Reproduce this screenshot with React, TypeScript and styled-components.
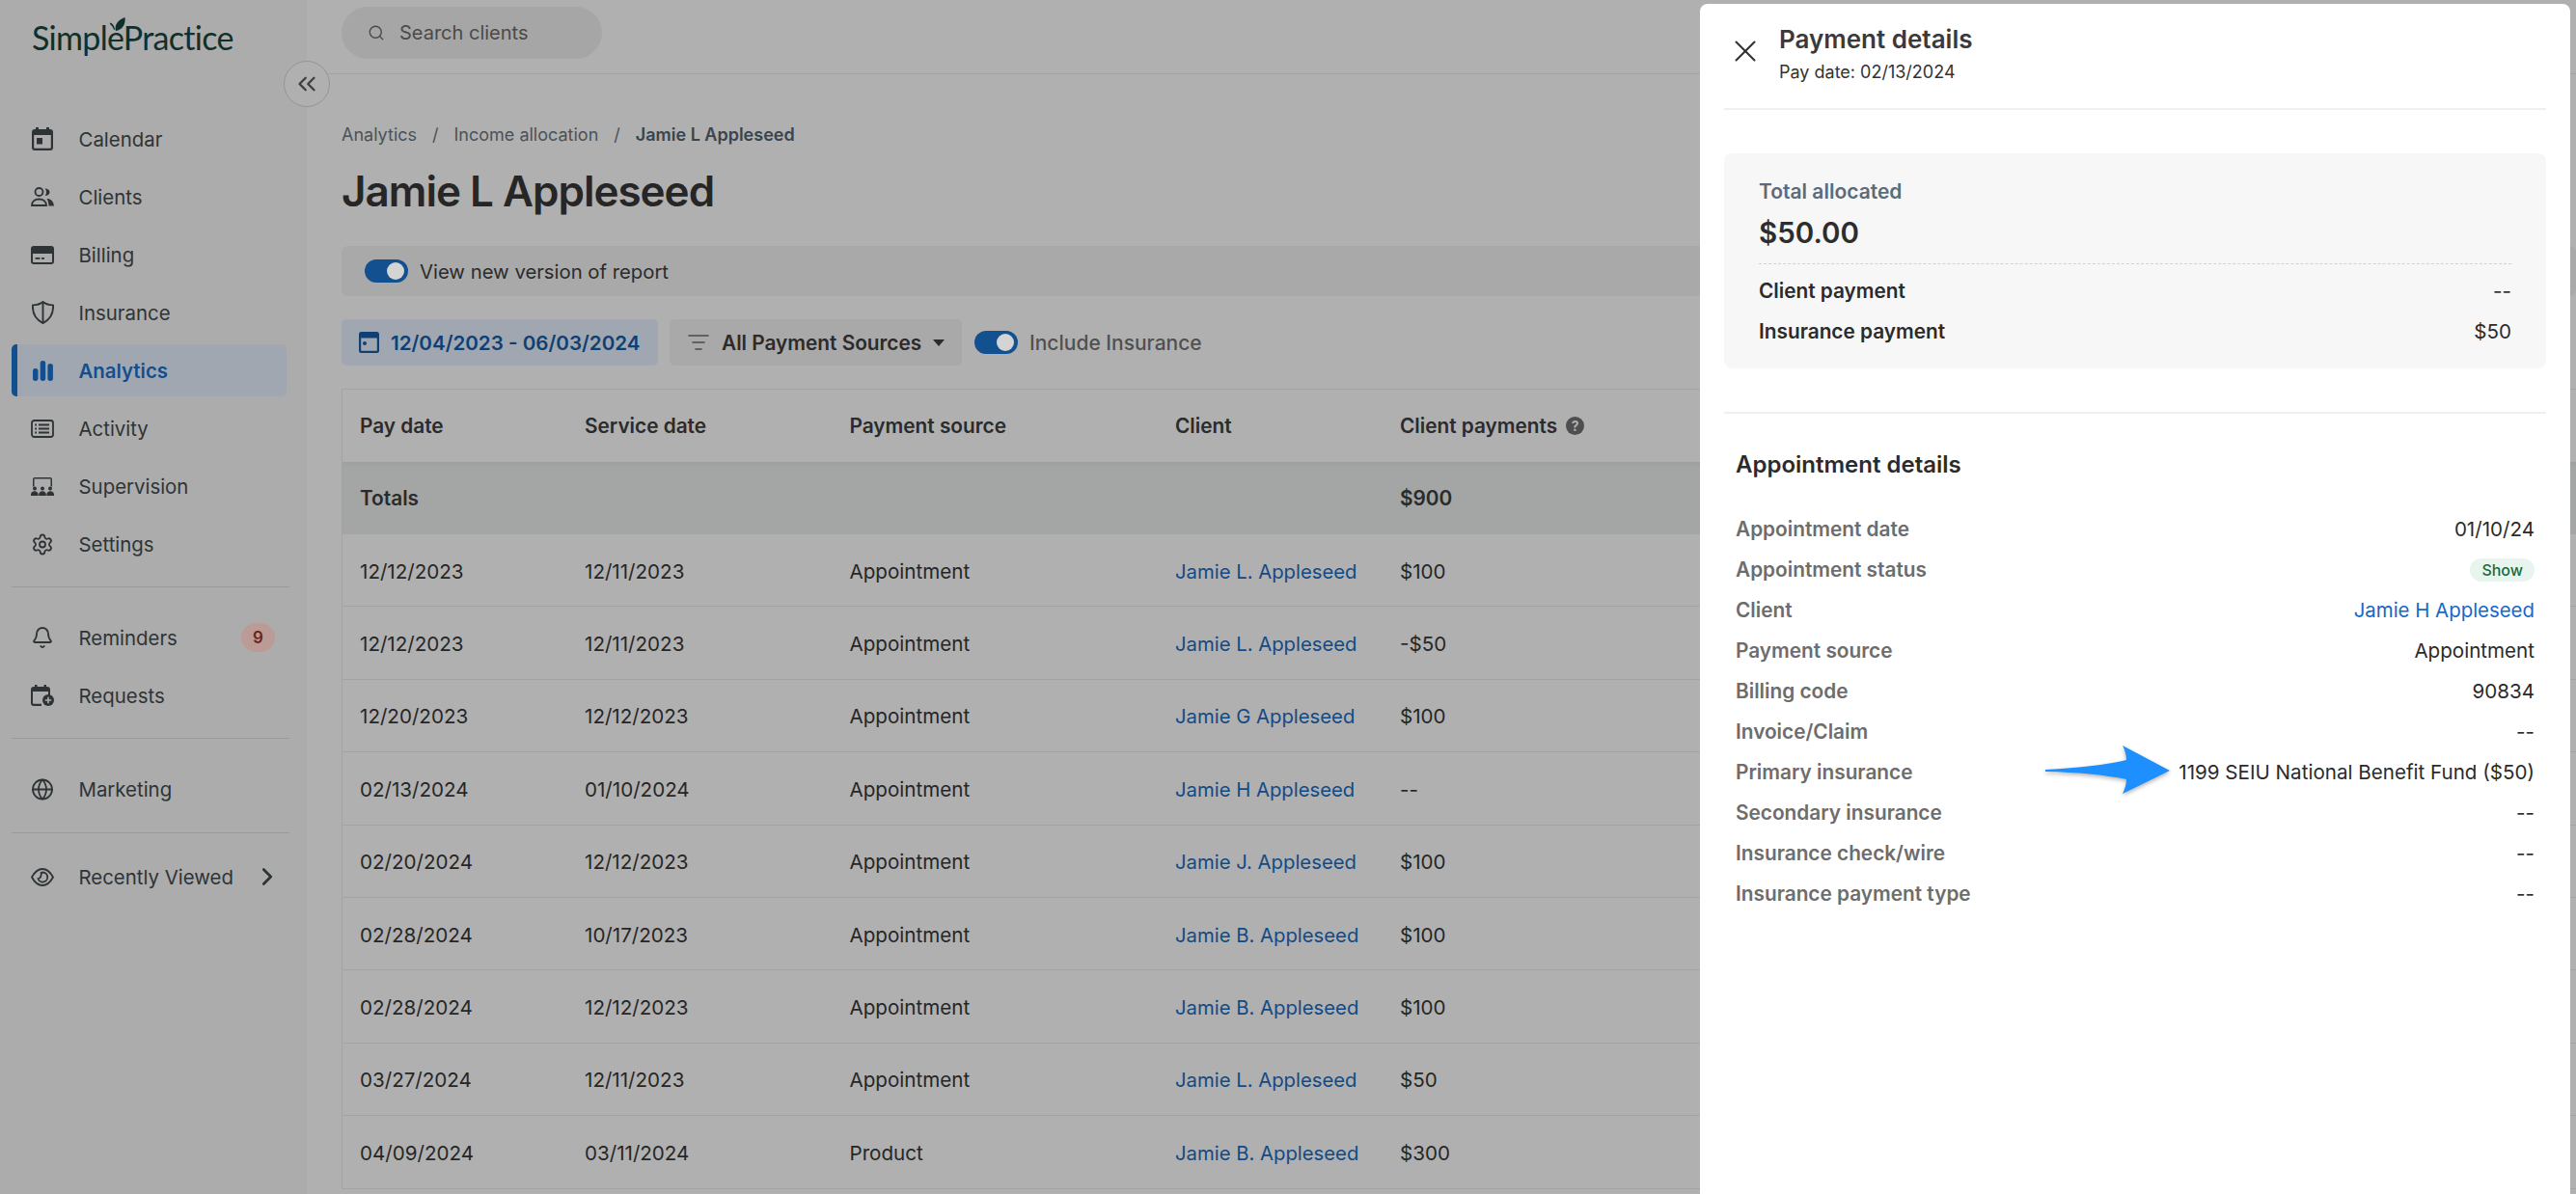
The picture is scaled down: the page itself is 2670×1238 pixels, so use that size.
import React from "react";
import styled, { createGlobalStyle } from "styled-components";
import { Bell, ChevronRight, ChevronsLeft, Globe, ListFilter, Search, Settings, X } from "lucide-react";

const GlobalStyle = createGlobalStyle`
  html, body {
    margin: 0;
    padding: 0;
    background: #b0b0b0;
  }
  * {
    box-sizing: border-box;
  }
  body {
    font-family: Inter, "Liberation Sans", sans-serif;
    font-size: 20.6px;
    color: #262626;
  }
`;

const Page = styled.div`
  position: relative;
  display: flex;
  width: 2670px;
  height: 1238px;
  overflow: hidden;
  background: #b0b0b0;
`;

/* sidebar */
const Sidebar = styled.aside`
  position: relative;
  flex: none;
  width: 318px;
  background: #acacac;
`;

const LogoRow = styled.div`
  height: 117px;
  padding: 14px 0 0 33px;
`;

const Logo = styled.div`
  position: relative;
  display: inline-block;
  font-family: Lato, sans-serif;
  font-size: 34px;
  line-height: 50px;
  letter-spacing: -0.7px;
  color: #10302c;
`;

const Leaf = styled.svg`
  position: absolute;
  left: 81px;
  top: 4px;
  width: 16px;
  height: 15px;
`;

const CollapseButton = styled.button`
  position: absolute;
  left: 294px;
  top: 63px;
  width: 48px;
  height: 48px;
  display: flex;
  align-items: center;
  justify-content: center;
  padding: 0;
  border: 1px solid #959595;
  border-radius: 50%;
  background: #b0b0b0;
  color: #3d3d3d;
`;

const Nav = styled.nav`
  display: flex;
  flex-direction: column;
  gap: 6px;
`;

const NavItem = styled.a<{ $active?: boolean }>`
  position: relative;
  display: flex;
  align-items: center;
  gap: 25.5px;
  height: 54px;
  margin: 0 21px 0 12px;
  border-radius: 5px;
  font-size: 20.4px;
  color: ${(p) => (p.$active ? "#114f8f" : "#2e3436")};
  font-weight: ${(p) => (p.$active ? 600 : 400)};
  background: ${(p) => (p.$active ? "#a1a7b0" : "transparent")};
  border-left: ${(p) => (p.$active ? "6px solid #114f8f" : "0")};
  padding-left: ${(p) => (p.$active ? "14px" : "20px")};
`;

const NavIcon = styled.span`
  flex: none;
  display: flex;
  align-items: center;
  justify-content: center;
  width: 24px;
  height: 30px;
  color: #2e3436;
`;

const ActiveIcon = styled(NavIcon)`
  color: #114f8f;
`;

const NavDivider = styled.hr<{ $after: number; $before: number }>`
  width: 288px;
  height: 1px;
  margin: ${(p) => p.$before}px 0 ${(p) => p.$after}px 12px;
  border: 0;
  background: #999;
`;

const Badge = styled.span`
  position: absolute;
  left: 238px;
  top: 12px;
  display: flex;
  align-items: center;
  justify-content: center;
  width: 35px;
  height: 30px;
  border-radius: 15px;
  background: #bb9b96;
  color: #6b241c;
  font-size: 17px;
  font-weight: 600;
`;

const RowChevron = styled.span`
  position: absolute;
  left: 250px;
  top: 12px;
  display: flex;
  color: #2e3436;
`;

/* main column */
const Main = styled.main`
  flex: 1;
  min-width: 0;
`;

const TopBar = styled.header`
  height: 77px;
  padding: 7px 0 0 36px;
  border-bottom: 1px solid #a3a3a3;
`;

const SearchPill = styled.div`
  display: flex;
  align-items: center;
  gap: 15px;
  width: 270px;
  height: 54px;
  padding-left: 27px;
  border-radius: 27px;
  background: #a6a6a6;
  color: #4a4a4a;
  font-size: 20px;
`;

const Content = styled.div`
  padding: 50px 0 0 36px;
`;

const Breadcrumb = styled.div`
  display: flex;
  align-items: center;
  gap: 16px;
  height: 24px;
  font-size: 18px;
  color: #4a5259;
`;

const CrumbCurrent = styled.span`
  font-weight: 600;
  color: #3a444c;
`;

const Title = styled.h1`
  margin: 19px 0 29px;
  font-size: 44px;
  line-height: 56px;
  font-weight: 600;
  letter-spacing: -1px;
  color: #262626;
`;

const Banner = styled.div`
  display: flex;
  align-items: center;
  gap: 12px;
  height: 52px;
  padding: 0 0 0 24px;
  border-radius: 6px;
  background: #a9a9a9;
  color: #2b2b2b;
  font-size: 20.3px;
`;

const Toggle = styled.span`
  position: relative;
  flex: none;
  display: block;
  width: 45px;
  height: 24px;
  border-radius: 12px;
  background: #12508f;
  &::after {
    content: "";
    position: absolute;
    right: 4px;
    top: 3px;
    width: 18px;
    height: 18px;
    border-radius: 50%;
    background: #d4d4d4;
  }
`;

const Filters = styled.div`
  display: flex;
  align-items: center;
  height: 48px;
  margin: 24px 0;
`;

const DateButton = styled.button`
  display: flex;
  align-items: center;
  gap: 12px;
  width: 328px;
  height: 48px;
  padding: 0 0 0 18px;
  border: 0;
  border-radius: 5px;
  background: #a1a7b0;
  color: #103f73;
  font: 600 20.6px Inter, sans-serif;
`;

const SourceButton = styled.button`
  display: flex;
  align-items: center;
  gap: 12px;
  width: 303px;
  height: 48px;
  margin: 0 13px 0 12px;
  padding: 0 0 0 18px;
  border: 0;
  border-radius: 5px;
  background: #a9a9a9;
  color: #2b2b2b;
  font: 600 20.8px Inter, sans-serif;
`;

const Caret = styled.span`
  width: 0;
  height: 0;
  border-left: 6px solid transparent;
  border-right: 6px solid transparent;
  border-top: 7px solid #2b2b2b;
`;

const IncludeLabel = styled.span`
  margin-left: 12px;
  font-size: 21px;
  font-weight: 500;
  color: #505050;
`;

const Table = styled.div`
  border-top: 1px solid #a3a3a3;
  border-left: 1px solid #a3a3a3;
`;

const TableRow = styled.div<{ $kind?: "head" | "total" }>`
  display: grid;
  grid-template-columns: 233px 274.5px 337.5px 233px 1fr;
  align-items: center;
  height: ${(p) => (p.$kind ? "75px" : "75.4px")};
  padding: ${(p) => (p.$kind ? "0" : "2px")} 0 0 18px;
  background: ${(p) => (p.$kind === "total" ? "#a3a6a5" : "transparent")};
  box-shadow: ${(p) => (p.$kind === "total" ? "inset 0 5px 5px -3px rgba(0, 0, 0, 0.05)" : "none")};
  border-bottom: ${(p) => (p.$kind ? "0" : "1px solid #a4a4a4")};
  font-size: ${(p) => (p.$kind ? "20.8px" : "20.6px")};
  font-weight: ${(p) => (p.$kind ? 600 : 400)};
  color: ${(p) => (p.$kind ? "#2b2b2b" : "#262626")};
`;

const HeadWithHelp = styled.span`
  display: flex;
  align-items: center;
  gap: 9px;
`;

const HelpDot = styled.span`
  display: flex;
  align-items: center;
  justify-content: center;
  width: 19px;
  height: 19px;
  border-radius: 50%;
  background: #4e4e4e;
  color: #b0b0b0;
  font-size: 14px;
  font-weight: 700;
`;

const ClientLink = styled.a`
  font-size: 20.3px;
  color: #134a85;
`;

/* drawer */
const Drawer = styled.section`
  position: absolute;
  left: 1762px;
  top: 4px;
  right: 6px;
  bottom: 0;
  padding: 0 25px;
  border-radius: 8px 8px 0 0;
  background: #fff;
`;

const DrawerHeader = styled.header`
  display: flex;
  align-items: center;
  gap: 16px;
  height: 110px;
  padding: 0 0 4px 3px;
  border-bottom: 2px solid #f0f0f0;
`;

const CloseIcon = styled.span`
  display: flex;
  margin-bottom: 6px;
  color: #333;
`;

const DrawerTitle = styled.h2`
  margin: 0 0 6px;
  font-size: 26px;
  line-height: 32px;
  font-weight: 600;
  color: #3a3a3a;
`;

const DrawerSub = styled.div`
  font-size: 18px;
  line-height: 24px;
  color: #333;
`;

const SummaryCard = styled.div`
  height: 223px;
  margin-top: 45px;
  padding: 26px 36px 0;
  border-radius: 8px;
  background: #f7f7f7;
`;

const SummaryLabel = styled.div`
  font-size: 21px;
  line-height: 28px;
  font-weight: 600;
  color: #5a6b7b;
`;

const SummaryTotal = styled.div`
  margin-top: 8px;
  padding-bottom: 12px;
  border-bottom: 1px dashed #d2d2d2;
  font-size: 29.5px;
  line-height: 40px;
  font-weight: 600;
  color: #2d2d2d;
`;

const SummaryRow = styled.div`
  display: flex;
  justify-content: space-between;
  margin-top: 14px;
  font-size: 20.8px;
  line-height: 28px;
  font-weight: 600;
  color: #2b2b2b;
`;

const SummaryValue = styled.span`
  font-size: 20.6px;
  font-weight: 400;
`;

const DetailSection = styled.div`
  margin-top: 45px;
  padding: 37px 12px 0;
  border-top: 2px solid #f0f0f0;
`;

const DetailTitle = styled.h3`
  margin: 0 0 29.5px;
  font-size: 24px;
  line-height: 32px;
  font-weight: 600;
  color: #2b2b2b;
`;

const DetailRow = styled.div`
  position: relative;
  display: flex;
  align-items: center;
  justify-content: space-between;
  height: 42px;
`;

const DetailLabel = styled.span`
  font-size: 20.8px;
  font-weight: 600;
  color: #6d6d6d;
`;

const DetailValue = styled.span`
  color: #2b2b2b;
`;

const DetailLink = styled.a`
  font-size: 20.4px;
  color: #1668c9;
`;

const StatusPill = styled.span`
  display: flex;
  align-items: center;
  height: 24px;
  padding: 0 12px;
  border-radius: 12px;
  background: #e8f5ee;
  color: #1a6b3c;
  font-size: 16px;
  font-weight: 500;
`;

const Arrow = styled.svg`
  position: absolute;
  left: 321px;
  top: -7px;
  width: 130px;
  height: 50px;
  overflow: visible;
  filter: drop-shadow(0 2px 2px rgba(0, 0, 0, 0.3));
`;

const CalendarIcon = () => (
  <svg width="22" height="24" viewBox="0 0 22 24" fill="currentColor">
    <path d="M4 0h3v2h8V0h3v2h1a3 3 0 0 1 3 3v16a3 3 0 0 1-3 3H3a3 3 0 0 1-3-3V5a3 3 0 0 1 3-3h1V0zM2.200 8v13c0 .5.300.8.800.8h16c.5 0 .8-.3.800-.8V8H2.200z" />
    <rect x="5" y="11" width="6" height="6.500" />
  </svg>
);

const ClientsIcon = () => (
  <svg width="24" height="20" viewBox="0 0 24 20" fill="none" stroke="currentColor" strokeWidth="1.800">
    <circle cx="8.500" cy="5" r="4" />
    <path d="M14.500 1.500c3 0 5 1.500 5 3.800s-2 3.700-5 3.700c1-1 1.500-2.300 1.500-3.700s-.5-2.800-1.500-3.800z" fill="currentColor" stroke="none" />
    <path d="M1 19c0-4 3-6.500 7.500-6.500S16 15 16 19z" />
    <path d="M16.500 12c4 0 7 2.500 7.500 7.500h-5.500c0-3-.7-5.500-2-7.500z" fill="currentColor" stroke="none" />
  </svg>
);

const BillingIcon = () => (
  <svg width="24" height="19" viewBox="0 0 24 19" fill="currentColor">
    <path d="M3 0h18a3 3 0 0 1 3 3v13a3 3 0 0 1-3 3H3a3 3 0 0 1-3-3V3a3 3 0 0 1 3-3zM2 8v8c0 .6.400 1 1 1h18c.6 0 1-.4 1-1V8H2z" />
    <rect x="4.500" y="12" width="5" height="1.800" />
    <rect x="11" y="12" width="3" height="1.800" />
  </svg>
);

const ShieldIcon = () => (
  <svg width="23" height="24" viewBox="0 0 24 25" fill="none" stroke="currentColor" strokeWidth="2" strokeLinejoin="round">
    <path d="M12 1c3 2.500 7 3.500 11 3.500.5 8.500-3 15.500-11 19.500C4 20 .5 13 1 4.500 5 4.500 9 3.500 12 1z" />
    <path d="M12 1v23" />
  </svg>
);

const BarsIcon = () => (
  <svg width="21" height="21" viewBox="0 0 21 21" fill="currentColor">
    <rect x="0" y="8" width="5.500" height="13" rx="2.700" />
    <rect x="7.700" y="0" width="5.500" height="21" rx="2.700" />
    <rect x="15.400" y="3" width="5.500" height="18" rx="2.700" />
  </svg>
);

const ActivityIcon = () => (
  <svg width="24" height="19" viewBox="0 0 24 19" fill="none" stroke="currentColor" strokeWidth="1.800">
    <rect x="1" y="1" width="22" height="17" rx="2.500" />
    <path d="M8 5.500h11M8 9.500h11M8 13.500h11" />
    <path d="M4.200 5.500h1.800M4.200 9.500h1.800M4.200 13.500h1.800" />
  </svg>
);

const SupervisionIcon = () => (
  <svg width="24" height="19" viewBox="0 0 24 19" fill="currentColor">
    <path d="M4 0h16a2 2 0 0 1 2 2v7.500h-1.500V1.500h-17v8H2V2a2 2 0 0 1 2-2z" />
    <circle cx="4" cy="11.500" r="2" />
    <circle cx="12" cy="11.500" r="2" />
    <circle cx="20" cy="11.500" r="2" />
    <path d="M0 19v-1.500c0-2 1.800-3.300 3.800-3.300s3.800 1.300 3.800 3.300V19zM8.200 19v-1.500c0-2 1.800-3.300 3.800-3.300s3.800 1.300 3.800 3.300V19zM16.400 19v-1.500c0-2 1.800-3.300 3.800-3.300s3.800 1.300 3.800 3.300V19z" />
  </svg>
);

const RequestsIcon = () => (
  <svg width="24" height="22" viewBox="0 0 24 22" fill="currentColor">
    <path d="M4 0h2.500v2h7V0H16v2h1a3 3 0 0 1 3 3v6h-2V7H2v12c0 .4.200.7.700.7H11V22H3a3 3 0 0 1-3-3V5a3 3 0 0 1 3-3h1V0z" />
    <circle cx="18" cy="16" r="6" />
    <path d="M17.200 12.800h1.600v2.400h2.400v1.600h-2.400v2.400h-1.600v-2.400h-2.400v-1.600h2.400z" fill="#acacac" />
  </svg>
);

const RecentIcon = () => (
  <svg width="24" height="19" viewBox="0 0 24 19" fill="none" stroke="currentColor" strokeWidth="1.800">
    <path d="M1 9.500C4 4 8 1 12 1s8 3 11 8.500C20 15 16 18 12 18S4 15 1 9.500z" />
    <path d="M12.500 4.500a5 5 0 1 1-5 6.500c2-.5 3.500-3 3.200-6.200.6-.2 1.200-.3 1.800-.3z" />
  </svg>
);

const DateIcon = () => (
  <svg width="21" height="24" viewBox="0 0 21 24" fill="currentColor">
    <path d="M2.500 1h16A2.500 2.500 0 0 1 21 3.500v17a2.500 2.500 0 0 1-2.500 2.500h-16A2.500 2.500 0 0 1 0 20.500v-17A2.500 2.500 0 0 1 2.500 1zM2.200 7.500v13c0 .2.100.3.300.3h16c.2 0 .3-.1.300-.3v-13H2.200z" />
    <circle cx="6" cy="13" r="2" />
  </svg>
);

type PaymentRow = [string, string, string, string, string];

const rows: PaymentRow[] = [
  ["12/12/2023", "12/11/2023", "Appointment", "Jamie L. Appleseed", "$100"],
  ["12/12/2023", "12/11/2023", "Appointment", "Jamie L. Appleseed", "-$50"],
  ["12/20/2023", "12/12/2023", "Appointment", "Jamie G Appleseed", "$100"],
  ["02/13/2024", "01/10/2024", "Appointment", "Jamie H Appleseed", "--"],
  ["02/20/2024", "12/12/2023", "Appointment", "Jamie J. Appleseed", "$100"],
  ["02/28/2024", "10/17/2023", "Appointment", "Jamie B. Appleseed", "$100"],
  ["02/28/2024", "12/12/2023", "Appointment", "Jamie B. Appleseed", "$100"],
  ["03/27/2024", "12/11/2023", "Appointment", "Jamie L. Appleseed", "$50"],
  ["04/09/2024", "03/11/2024", "Product", "Jamie B. Appleseed", "$300"],
];

const App = () => {
  return (
    <Page>
      <GlobalStyle />
      <Sidebar>
        <LogoRow>
          <Logo>
            SimplePractice
            <Leaf viewBox="0 0 16 15" fill="#10302c">
              <path d="M6 14C4.500 9 7 3 15.500 0c1 7-2.500 13-9.500 14z" />
              <path d="M0 5.500c2.500.5 4 2.500 5 6.500-.3.5-.5 1-.6 1.500C3 10 1.500 8 0 7z" />
            </Leaf>
          </Logo>
        </LogoRow>
        <CollapseButton>
          <ChevronsLeft size={30} strokeWidth={1.8} />
        </CollapseButton>
        <Nav>
          <NavItem><NavIcon><CalendarIcon /></NavIcon>Calendar</NavItem>
          <NavItem><NavIcon><ClientsIcon /></NavIcon>Clients</NavItem>
          <NavItem><NavIcon><BillingIcon /></NavIcon>Billing</NavItem>
          <NavItem><NavIcon><ShieldIcon /></NavIcon>Insurance</NavItem>
          <NavItem $active><ActiveIcon><BarsIcon /></ActiveIcon>Analytics</NavItem>
          <NavItem><NavIcon><ActivityIcon /></NavIcon>Activity</NavItem>
          <NavItem><NavIcon><SupervisionIcon /></NavIcon>Supervision</NavItem>
          <NavItem><NavIcon><Settings size={27} strokeWidth={1.8} /></NavIcon>Settings</NavItem>
        </Nav>
        <NavDivider $before={17} $after={25} />
        <Nav>
          <NavItem><NavIcon><Bell size={28} strokeWidth={1.8} /></NavIcon>Reminders<Badge>9</Badge></NavItem>
          <NavItem><NavIcon><RequestsIcon /></NavIcon>Requests</NavItem>
        </Nav>
        <NavDivider $before={17} $after={25} />
        <Nav>
          <NavItem><NavIcon><Globe size={27} strokeWidth={1.8} /></NavIcon>Marketing</NavItem>
        </Nav>
        <NavDivider $before={18} $after={18} />
        <Nav>
          <NavItem>
            <NavIcon><RecentIcon /></NavIcon>Recently Viewed
            <RowChevron><ChevronRight size={30} strokeWidth={2.2} /></RowChevron>
          </NavItem>
        </Nav>
      </Sidebar>

      <Main>
        <TopBar>
          <SearchPill>
            <Search size={18} strokeWidth={1.8} />
            Search clients
          </SearchPill>
        </TopBar>
        <Content>
          <Breadcrumb>
            <span>Analytics</span>
            <span>/</span>
            <span>Income allocation</span>
            <span>/</span>
            <CrumbCurrent>Jamie L Appleseed</CrumbCurrent>
          </Breadcrumb>
          <Title>Jamie L Appleseed</Title>
          <Banner>
            <Toggle />
            View new version of report
          </Banner>
          <Filters>
            <DateButton>
              <DateIcon />
              12/04/2023 - 06/03/2024
            </DateButton>
            <SourceButton>
              <ListFilter size={24} strokeWidth={1.6} color="#4a4a4a" />
              All Payment Sources
              <Caret />
            </SourceButton>
            <Toggle />
            <IncludeLabel>Include Insurance</IncludeLabel>
          </Filters>
          <Table>
            <TableRow $kind="head">
              <span>Pay date</span>
              <span>Service date</span>
              <span>Payment source</span>
              <span>Client</span>
              <HeadWithHelp>Client payments<HelpDot>?</HelpDot></HeadWithHelp>
            </TableRow>
            <TableRow $kind="total">
              <span>Totals</span>
              <span />
              <span />
              <span />
              <span>$900</span>
            </TableRow>
            {rows.map((r, i) => (
              <TableRow key={i}>
                <span>{r[0]}</span>
                <span>{r[1]}</span>
                <span>{r[2]}</span>
                <ClientLink>{r[3]}</ClientLink>
                <span>{r[4]}</span>
              </TableRow>
            ))}
          </Table>
        </Content>
      </Main>

      <Drawer>
        <DrawerHeader>
          <CloseIcon><X size={38} strokeWidth={1.3} /></CloseIcon>
          <div>
            <DrawerTitle>Payment details</DrawerTitle>
            <DrawerSub>Pay date: 02/13/2024</DrawerSub>
          </div>
        </DrawerHeader>
        <SummaryCard>
          <SummaryLabel>Total allocated</SummaryLabel>
          <SummaryTotal>$50.00</SummaryTotal>
          <SummaryRow>Client payment<SummaryValue>--</SummaryValue></SummaryRow>
          <SummaryRow>Insurance payment<SummaryValue>$50</SummaryValue></SummaryRow>
        </SummaryCard>
        <DetailSection>
          <DetailTitle>Appointment details</DetailTitle>
          <DetailRow><DetailLabel>Appointment date</DetailLabel><DetailValue>01/10/24</DetailValue></DetailRow>
          <DetailRow><DetailLabel>Appointment status</DetailLabel><StatusPill>Show</StatusPill></DetailRow>
          <DetailRow><DetailLabel>Client</DetailLabel><DetailLink>Jamie H Appleseed</DetailLink></DetailRow>
          <DetailRow><DetailLabel>Payment source</DetailLabel><DetailValue>Appointment</DetailValue></DetailRow>
          <DetailRow><DetailLabel>Billing code</DetailLabel><DetailValue>90834</DetailValue></DetailRow>
          <DetailRow><DetailLabel>Invoice/Claim</DetailLabel><DetailValue>--</DetailValue></DetailRow>
          <DetailRow>
            <DetailLabel>Primary insurance</DetailLabel>
            <Arrow viewBox="0 0 130 50">
              <path d="M129 26L80 0Q84 8 84 15Q55 22 0 25V27Q50 28 84 35Q84 42 80 50Z" fill="#1e8fff" />
            </Arrow>
            <DetailValue>1199 SEIU National Benefit Fund ($50)</DetailValue>
          </DetailRow>
          <DetailRow><DetailLabel>Secondary insurance</DetailLabel><DetailValue>--</DetailValue></DetailRow>
          <DetailRow><DetailLabel>Insurance check/wire</DetailLabel><DetailValue>--</DetailValue></DetailRow>
          <DetailRow><DetailLabel>Insurance payment type</DetailLabel><DetailValue>--</DetailValue></DetailRow>
        </DetailSection>
      </Drawer>
    </Page>
  );
};

export default App;
